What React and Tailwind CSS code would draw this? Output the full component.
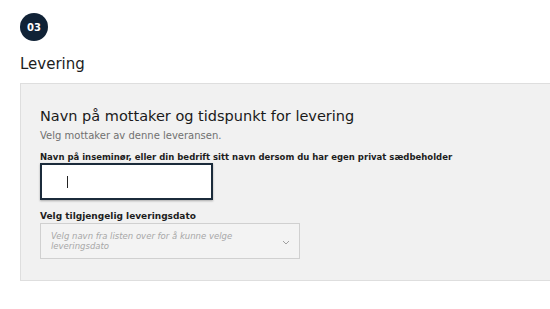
import React from 'react';

const StepBadge = ({ n }) => (
  <div className="w-[28px] h-[28px] rounded-full bg-[#102236] text-white flex items-center justify-center text-[10px] font-bold">
    {n}
  </div>
);

export default function App() {
  return (
    <div className="w-[550px] h-[309px] bg-white overflow-hidden text-[#1d1d1d] font-['DejaVu_Sans',_'Noto_Sans',_sans-serif]">
      <div className="pl-[20px] pt-[13px]">
        <StepBadge n="03" />
        <h2 className="mt-[14px] text-[15px] font-medium leading-[18px]">Levering</h2>
      </div>

      <div className="ml-[20px] mt-[10px] w-[560px] h-[198px] bg-[#f1f1f1] border border-[#dedede] pl-[19px] pt-[22px]">
        <h3 className="text-[14.5px] font-medium leading-[20px] text-[#1a1a1a]">
          Navn på mottaker og tidspunkt for levering
        </h3>
        <p className="mt-[3px] text-[10px] leading-[14px] text-[#707070]">Velg mottaker av denne leveransen.</p>

        <label className="block mt-[9px] text-[8.5px] font-semibold leading-[11px] text-[#1d1d1d]">
          Navn på inseminør, eller din bedrift sitt navn dersom du har egen privat sædbeholder
        </label>
        <div className="w-[173px] h-[37px] bg-white border-2 border-[#1b2b3b] shadow-[0_1px_2px_rgba(0,0,0,0.3)] flex items-center pl-[25px]">
          <span className="block w-px h-[12px] bg-[#222]" />
        </div>

        <label className="block mt-[10px] text-[9px] font-semibold leading-[12px] text-[#1d1d1d]">
          Velg tilgjengelig leveringsdato
        </label>
        <div className="mt-[1px] w-[260px] h-[36px] bg-[#f3f3f3] border border-[#d0d0d0] flex items-center justify-between pl-[10px] pr-[9px]">
          <span className="italic text-[8.5px] leading-[10px] text-[#a7a7a7] w-[190px]">
            Velg navn fra listen over for å kunne velge leveringsdato
          </span>
          <svg width="8" height="5" viewBox="0 0 8 5" fill="none" className="mt-[2px]">
            <path d="M1 1l3 3 3-3" stroke="#a0a0a0" strokeWidth="1" />
          </svg>
        </div>
      </div>
    </div>
  );
}
